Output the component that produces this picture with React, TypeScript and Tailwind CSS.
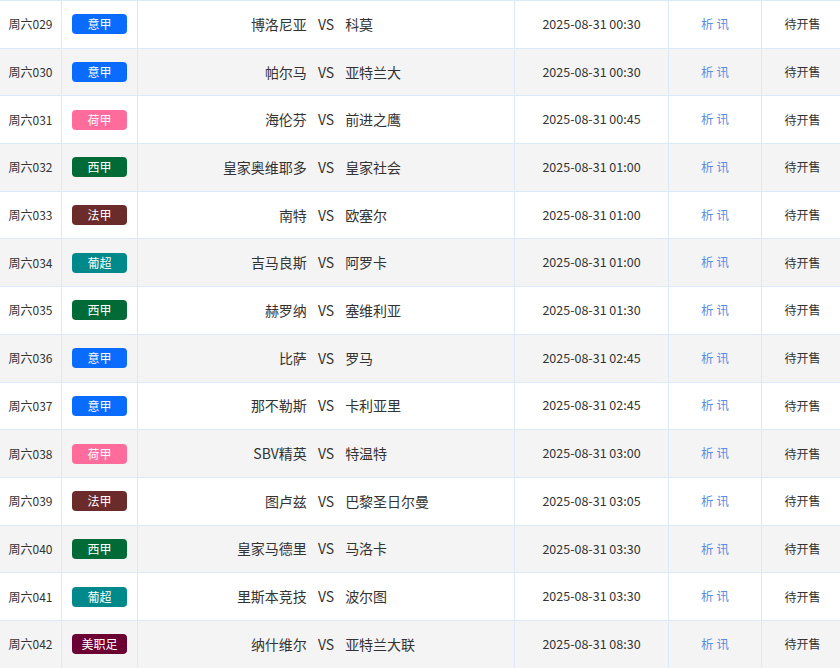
const leagues: Record<string, string> = {
  意甲: "bg-[#0a6cff]",
  荷甲: "bg-[#ff6b9b]",
  西甲: "bg-[#006b37]",
  法甲: "bg-[#6b2b2b]",
  葡超: "bg-[#00898a]",
  美职足: "bg-[#6b0033]",
};

type Match = {
  no: string;
  league: string;
  home: string;
  away: string;
  time: string;
};

const matches: Match[] = [
  { no: "周六029", league: "意甲", home: "博洛尼亚", away: "科莫", time: "2025-08-31 00:30" },
  { no: "周六030", league: "意甲", home: "帕尔马", away: "亚特兰大", time: "2025-08-31 00:30" },
  { no: "周六031", league: "荷甲", home: "海伦芬", away: "前进之鹰", time: "2025-08-31 00:45" },
  { no: "周六032", league: "西甲", home: "皇家奥维耶多", away: "皇家社会", time: "2025-08-31 01:00" },
  { no: "周六033", league: "法甲", home: "南特", away: "欧塞尔", time: "2025-08-31 01:00" },
  { no: "周六034", league: "葡超", home: "吉马良斯", away: "阿罗卡", time: "2025-08-31 01:00" },
  { no: "周六035", league: "西甲", home: "赫罗纳", away: "塞维利亚", time: "2025-08-31 01:30" },
  { no: "周六036", league: "意甲", home: "比萨", away: "罗马", time: "2025-08-31 02:45" },
  { no: "周六037", league: "意甲", home: "那不勒斯", away: "卡利亚里", time: "2025-08-31 02:45" },
  { no: "周六038", league: "荷甲", home: "SBV精英", away: "特温特", time: "2025-08-31 03:00" },
  { no: "周六039", league: "法甲", home: "图卢兹", away: "巴黎圣日尔曼", time: "2025-08-31 03:05" },
  { no: "周六040", league: "西甲", home: "皇家马德里", away: "马洛卡", time: "2025-08-31 03:30" },
  { no: "周六041", league: "葡超", home: "里斯本竞技", away: "波尔图", time: "2025-08-31 03:30" },
  { no: "周六042", league: "美职足", home: "纳什维尔", away: "亚特兰大联", time: "2025-08-31 08:30" },
];

export default function App() {
  return (
    <div
      className="h-[668px] w-[840px] overflow-hidden bg-white text-[#333]"
      style={{ fontFamily: '"Noto Sans CJK SC", "Noto Sans", sans-serif' }}
    >
      <div className="border-t border-[#dce9f6]">
        {matches.map((m, i) => (
          <div
            key={m.no}
            className={`flex h-[47.7px] border-b border-[#dce9f6] ${i % 2 === 1 ? "bg-[#f4f4f4]" : "bg-white"}`}
          >
            <div className="flex w-[62px] items-center justify-center border-r border-[#dce9f6] text-[12px]">
              {m.no}
            </div>
            <div className="flex w-[76px] items-center justify-center border-r border-[#dce9f6]">
              <span
                className={`flex h-[20px] w-[55px] items-center justify-center rounded-[4px] text-[12px] text-white ${leagues[m.league]}`}
              >
                {m.league}
              </span>
            </div>
            <div className="flex w-[377px] items-center border-r border-[#dce9f6] text-[14px]">
              <span className="flex-1 text-right">{m.home}</span>
              <span className="px-[11px]">VS</span>
              <span className="flex-1 text-left">{m.away}</span>
            </div>
            <div className="flex w-[154px] items-center justify-center border-r border-[#dce9f6] text-[12.5px]">
              {m.time}
            </div>
            <div className="flex w-[93px] items-center justify-center border-r border-[#dce9f6] text-[12.5px] text-[#5b8de0]">
              析 讯
            </div>
            <div className="flex flex-1 items-center justify-center pl-[3px] text-[12px]">待开售</div>
          </div>
        ))}
      </div>
    </div>
  );
}
